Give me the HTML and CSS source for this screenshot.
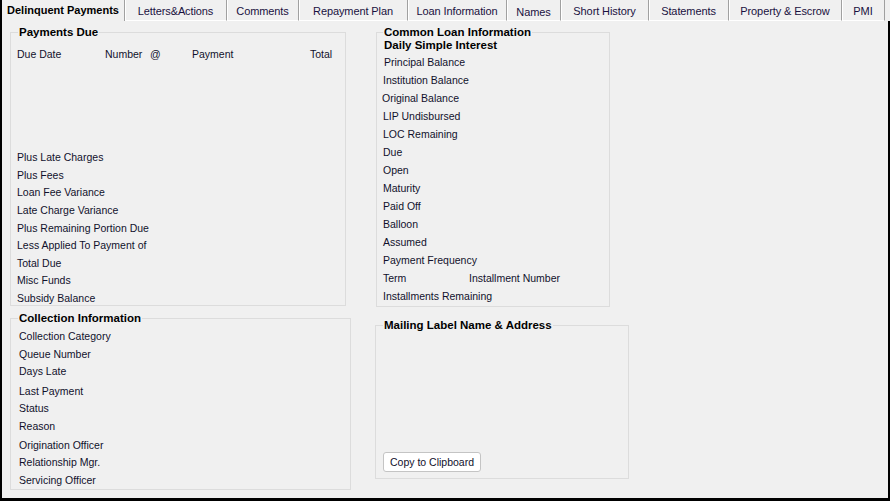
FILE: index.html
```html
<!DOCTYPE html>
<html>
<head>
<meta charset="utf-8">
<title>Delinquent Payments</title>
<link rel="stylesheet" href="styles.css">
</head>
<body>
<div class="window">
  <div class="tabs">
    <div class="tab tab-active w1">Delinquent Payments</div>
    <div class="tab w2">Letters&amp;Actions</div>
    <div class="tab w3">Comments</div>
    <div class="tab w4">Repayment Plan</div>
    <div class="tab w5">Loan Information</div>
    <div class="tab w6 tab-low">Names</div>
    <div class="tab w7">Short History</div>
    <div class="tab w8">Statements</div>
    <div class="tab w9">Property &amp; Escrow</div>
    <div class="tab w10">PMI</div>
    <div class="tab-fill"></div>
  </div>
  <div class="panel">
    <div class="col col-left">
      <section class="group group-due">
        <h2 class="group-title">Payments Due</h2>
        <div class="due-head">
          <span>Due Date</span><span>Number</span><span>@</span><span>Payment</span><span>Total</span>
        </div>
        <ul class="rows due-rows">
          <li>Plus Late Charges</li>
          <li>Plus Fees</li>
          <li>Loan Fee Variance</li>
          <li>Late Charge Variance</li>
          <li>Plus Remaining Portion Due</li>
          <li>Less Applied To Payment of</li>
          <li>Total Due</li>
          <li>Misc Funds</li>
          <li>Subsidy Balance</li>
        </ul>
      </section>
      <section class="group group-coll">
        <h2 class="group-title">Collection Information</h2>
        <ul class="rows coll-rows">
          <li>Collection Category</li>
          <li>Queue Number</li>
          <li>Days Late</li>
          <li class="sp-2">Last Payment</li>
          <li>Status</li>
          <li>Reason</li>
          <li class="sp-15">Origination Officer</li>
          <li>Relationship Mgr.</li>
          <li>Servicing Officer</li>
        </ul>
      </section>
    </div>
    <div class="col col-right">
      <section class="group group-loan">
        <h2 class="group-title">Common Loan Information</h2>
        <div class="subtitle">Daily Simple Interest</div>
        <ul class="rows loan-rows">
          <li>Principal Balance</li>
          <li class="nudge-1">Institution Balance</li>
          <li class="nudge-2">Original Balance</li>
          <li class="nudge-1">LIP Undisbursed</li>
          <li class="nudge-1">LOC Remaining</li>
          <li class="nudge-1">Due</li>
          <li class="nudge-1">Open</li>
          <li class="nudge-1">Maturity</li>
          <li class="nudge-1">Paid Off</li>
          <li class="nudge-1">Balloon</li>
          <li class="nudge-1">Assumed</li>
          <li class="nudge-1">Payment Frequency</li>
          <li class="nudge-1 term-row"><span class="term">Term</span><span>Installment Number</span></li>
          <li class="nudge-1">Installments Remaining</li>
        </ul>
      </section>
      <section class="group group-mail">
        <h2 class="group-title">Mailing Label Name &amp; Address</h2>
        <button class="btn" type="button">Copy to Clipboard</button>
      </section>
    </div>
  </div>
</div>
</body>
</html>
```

FILE: styles.css
```css
* { box-sizing: border-box; }
html, body { margin: 0; padding: 0; }
body {
  background: #f0f0f0;
  font-family: "Liberation Sans", Arial, sans-serif;
  font-size: 10.5px;
  color: #10102c;
}
.window {
  width: 890px;
  height: 501px;
  display: flex;
  flex-direction: column;
  border-left: 2px solid #000;
}

/* tabs */
.tabs {
  height: 21px;
  flex: none;
  display: flex;
}
.tab {
  height: 21px;
  flex: none;
  font-size: 11px;
  line-height: 20px;
  padding-top: 1px;
  text-align: center;
  color: #1a1040;
  white-space: nowrap;
  border-right: 1px solid #a0a0a0;
  border-bottom: 1px solid #ffffff;
  box-shadow: inset 1px 0 0 #ffffff;
  letter-spacing: -0.1px;
}
.tab-active {
  font-weight: bold;
  color: #000;
  border-bottom: none;
  box-shadow: none;
  padding-top: 0;
  letter-spacing: 0;
}
.tab-low { padding-top: 2px; }
.tab-fill {
  flex: 1;
  height: 21px;
}
.w1 { width: 123px; }
.w2 { width: 102px; }
.w3 { width: 72px; }
.w4 { width: 109px; }
.w5 { width: 99px; }
.w6 { width: 54px; }
.w7 { width: 88px; }
.w8 { width: 80px; }
.w9 { width: 113px; }
.w10 { width: 43px; }

/* panel */
.panel {
  flex: 1;
  display: flex;
  align-items: flex-start;
  padding: 11px 0 0 8px;
  border-right: 2px solid #000;
  border-bottom: 3px solid #000;
}
.col { display: flex; flex-direction: column; }
.col-left { width: 341px; }
.col-right { margin-left: 24px; }

/* group boxes */
.group {
  border: 1px solid #dcdcdc;
  display: flex;
  flex-direction: column;
}
.group-title {
  margin: -7px 0 0 0;
  padding: 0 1px;
  width: fit-content;
  background: #f0f0f0;
  font-size: 11.5px;
  font-weight: bold;
  line-height: 13px;
  color: #000;
  white-space: nowrap;
}
.subtitle {
  font-size: 11.5px;
  font-weight: bold;
  line-height: 13px;
  color: #000;
}
.rows {
  list-style: none;
  margin: 0;
  padding: 0;
}
.rows li { line-height: 14px; white-space: nowrap; }

.group-due {
  width: 336px;
  height: 274px;
  padding-left: 6px;
}
.group-due .group-title { margin-left: 1px; }
.due-head {
  margin-top: 8px;
  display: grid;
  grid-template-columns: 88px 45px 42px 118px auto;
  line-height: 14px;
}
.due-rows { margin-top: auto; }
.due-rows li + li { margin-top: 3.625px; }

.group-coll {
  margin-top: 12px;
  width: 341px;
  height: 172px;
  padding-left: 8px;
}
.group-coll .group-title { margin-left: -1px; }
.coll-rows { margin-top: 4px; }
.coll-rows li + li { margin-top: 3.5px; }
.coll-rows li.sp-2 { margin-top: 5.5px; }
.coll-rows li.sp-15 { margin-top: 5px; }

.group-loan {
  margin-left: 1px;
  width: 234px;
  height: 275px;
  padding-left: 7px;
}
.group-loan .group-title { margin-left: -1px; }
.loan-rows { margin-top: 1px; }
.loan-rows li { line-height: 18px; }
.loan-rows li.nudge-1 { margin-left: -1px; }
.loan-rows li.nudge-2 { margin-left: -2px; }
.term-row { display: flex; }
.term { width: 86px; }

.group-mail {
  margin-top: 18px;
  width: 254px;
  height: 154px;
  padding-left: 8px;
}
.group-mail .group-title { margin-left: -1px; }
.btn {
  margin: auto 0 6px -1px;
  width: 98px;
  height: 20px;
  padding: 0;
  background: #ffffff;
  border: 1px solid #c4c4c4;
  border-radius: 3px;
  font-family: "Liberation Sans", Arial, sans-serif;
  font-size: 10.5px;
  color: #10102c;
  line-height: 18px;
}
```
